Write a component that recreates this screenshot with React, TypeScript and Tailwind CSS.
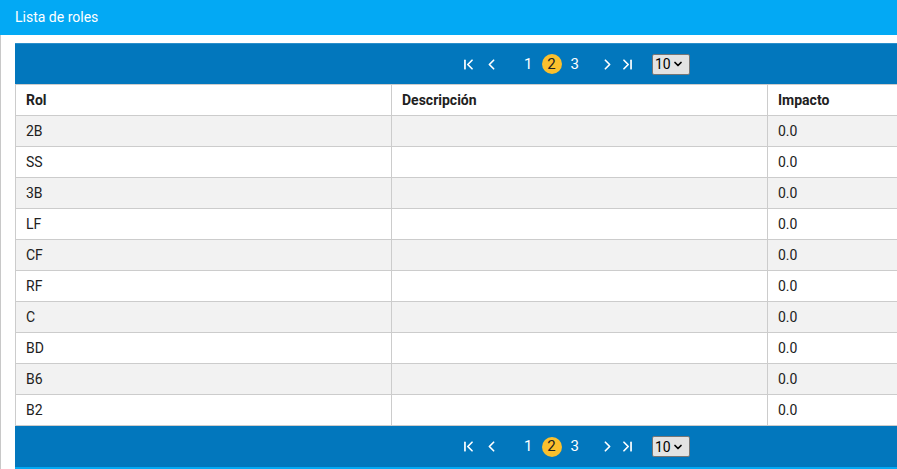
import { ChevronFirst, ChevronLast, ChevronLeft, ChevronRight, ChevronDown } from "lucide-react"

const rows = ["2B", "SS", "3B", "LF", "CF", "RF", "C", "BD", "B6", "B2"]

function Pager({ top }: { top?: boolean }) {
  return (
    <div
      className={
        "flex h-[41px] w-[1128px] items-center justify-center bg-[#0277bd] pr-[8px] text-white " +
        (top ? "border-t border-[#2a8fcb]" : "")
      }
    >
      <div className="flex items-center">
        <ChevronFirst className="h-[17px] w-[17px]" strokeWidth={2.4} />
        <ChevronLeft className="ml-[6px] h-[17px] w-[17px]" strokeWidth={2.4} />
        <span className="ml-[24px] text-[15px] leading-none">1</span>
        <span className="ml-[9px] flex h-[20px] w-[20px] items-center justify-center rounded-full bg-[#fbc02d] text-[15px] leading-none text-[#212121]">
          2
        </span>
        <span className="ml-[9px] text-[15px] leading-none">3</span>
        <ChevronRight className="ml-[20px] h-[17px] w-[17px]" strokeWidth={2.4} />
        <ChevronLast className="ml-[3px] h-[17px] w-[17px]" strokeWidth={2.4} />
        <div className="ml-[16px] flex h-[21px] w-[38px] items-center rounded-[2px] border border-[#767676] bg-[#e3e3e3] pl-[2px] text-[14px] leading-none text-black">
          10
          <ChevronDown className="ml-[1px] h-[12px] w-[12px]" strokeWidth={3.5} />
        </div>
      </div>
    </div>
  )
}

export default function App() {
  return (
    <div className="h-[469px] w-[897px] overflow-hidden bg-white font-['Roboto',sans-serif] text-[14px] text-[#212121]">
      <div className="flex h-[35px] items-center bg-[#03a9f4] px-[15px] text-[14px] text-white">
        Lista de roles
      </div>
      <div className="h-[434px] border-l border-[#c8c8c8] pl-[14px] pt-[8px]">
        <Pager top />
        <table className="w-[1128px] table-fixed border-collapse">
          <thead>
            <tr className="h-[31px]">
              <th className="w-[376px] border border-[#cccccc] px-[10px] text-left font-bold">Rol</th>
              <th className="w-[376px] border border-[#cccccc] px-[10px] text-left font-bold">Descripción</th>
              <th className="w-[376px] border border-[#cccccc] px-[10px] text-left font-bold">Impacto</th>
            </tr>
          </thead>
          <tbody>
            {rows.map((r, i) => (
              <tr key={r} className={"h-[31px] " + (i % 2 === 0 ? "bg-[#f2f2f2]" : "bg-white")}>
                <td className="border border-[#cccccc] px-[10px]">{r}</td>
                <td className="border border-[#cccccc] px-[10px]"></td>
                <td className="border border-[#cccccc] px-[10px]">0.0</td>
              </tr>
            ))}
          </tbody>
        </table>
        <Pager />
        <div className="h-[10px] w-[1128px] bg-[#03a9f4]" />
      </div>
    </div>
  )
}
